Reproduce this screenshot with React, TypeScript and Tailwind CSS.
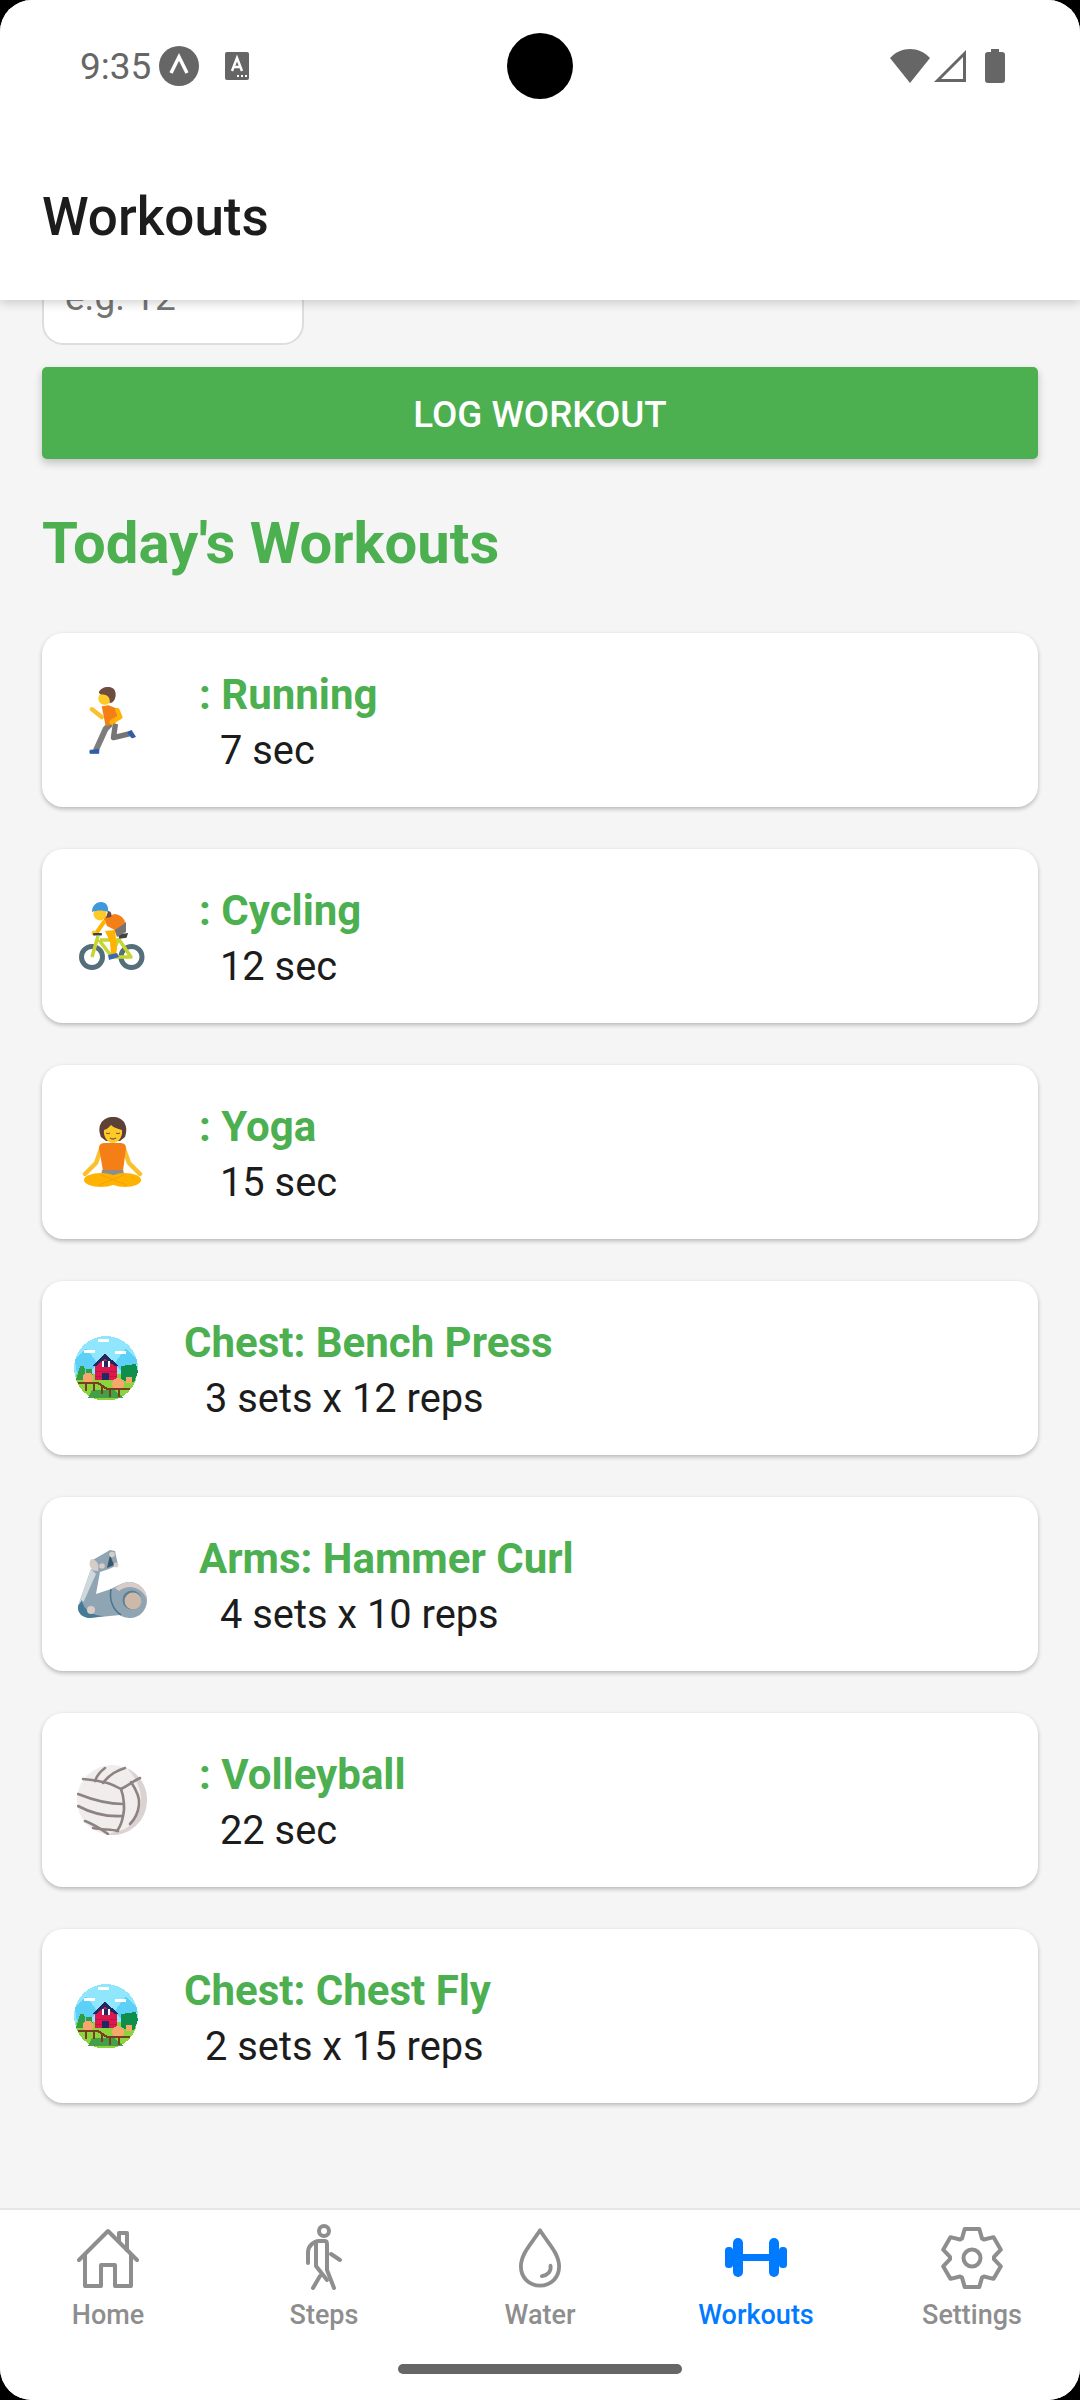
import React from "react";

const font = { fontFamily: "Roboto, sans-serif" };

function gearPath() {
  const cx = 32;
  const cy = 32;
  const pt = (deg: number, r: number) => {
    const a = (deg * Math.PI) / 180;
    return `${(cx + r * Math.cos(a)).toFixed(2)} ${(cy - r * Math.sin(a)).toFixed(2)}`;
  };
  let d = "";
  for (let i = 0; i < 6; i++) {
    const c = 90 + i * 60;
    d += `${i === 0 ? "M" : "L"}${pt(c - 27, 22)} L${pt(c - 14, 30)} L${pt(c + 14, 30)} L${pt(c + 27, 22)} `;
  }
  return d + "Z";
}

function Runner() {
  return (
    <svg viewBox="0 0 48 68" className="w-[47px] h-[68px]">
      <path d="M22 38 L17 43 L7 65" fill="none" stroke="#7d7d7d" strokeWidth="6" strokeLinejoin="round" />
      <path d="M27 38 L25 52 L42 48" fill="none" stroke="#757575" strokeWidth="5.5" strokeLinejoin="round" />
      <path d="M1 65 L10 64 L10 68 L1 68 Z" fill="#2f5da8" stroke="#2f5da8" strokeWidth="1" strokeLinejoin="round" />
      <path d="M40 47 L43 45 L47 51 L44 52 Z" fill="#2f5da8" stroke="#2f5da8" strokeWidth="1.5" strokeLinejoin="round" />
      <path d="M13 20 L20 19 L30 23 L29 31 L27 31 L27 38 L17 40 Z" fill="#f57f17" />
      <path d="M3 23 L13 31" fill="none" stroke="#fbc02d" strokeWidth="4.5" strokeLinecap="round" />
      <path d="M29 24 L32 31 L23 36" fill="none" stroke="#ffb300" strokeWidth="4.5" strokeLinecap="round" strokeLinejoin="round" />
      <circle cx="16" cy="12" r="6.5" fill="#ffca28" />
      <path d="M10 6 C12 -1 26 -2 27 6 C28 12 25 17 21 17 C22 12 20 9 15 8 C13 8 11 8 10 6 Z" fill="#6d4c41" />
    </svg>
  );
}

function Cyclist() {
  return (
    <svg viewBox="0 0 66 68" className="w-[66px] h-[68px]">
      <circle cx="13" cy="55" r="10.5" fill="none" stroke="#546e7a" strokeWidth="5" />
      <circle cx="52.5" cy="55" r="10.5" fill="none" stroke="#546e7a" strokeWidth="5" />
      <path d="M19 34 L13 55 M20 38 L33 55 L52 55 L39 36 M21 38 L39 38 L32 55" fill="none" stroke="#c6d631" strokeWidth="3.5" strokeLinejoin="round" />
      <path d="M40 33 L48 32 L47 35 L41 36 Z" fill="#424242" stroke="#424242" strokeWidth="1.5" />
      <path d="M35 27 L47 20 L47 30 L38 35 Z" fill="#757575" />
      <path d="M26 29 L36 28 L38 46 L37 53 L32 53 L31 40 Z" fill="#ffb300" />
      <path d="M29 53 L38 51 L40 55 L30 58 Z" fill="#3b67b5" />
      <path d="M24 15 L36 12 C42 13 46 17 46 21 L36 28 L28 24 Z" fill="#f57f17" />
      <path d="M25 20 L18 30" fill="none" stroke="#ffb300" strokeWidth="4" strokeLinecap="round" />
      <circle cx="15" cy="31" r="2.5" fill="#ffca28" />
      <rect x="14" y="31" width="9" height="2.5" rx="1" fill="#37474f" />
      <circle cx="21" cy="12" r="6.5" fill="#ffca28" />
      <path d="M29 9 C32 9 33 12 32 15 L27 16 Z" fill="#6d4c41" />
      <path d="M13 10 C13 3 18 0 22 0 C27 0 30 4 29 10 C24 8 18 8 13 10 Z" fill="#3f97dc" />
    </svg>
  );
}

function Yoga() {
  return (
    <svg viewBox="0 0 61 70" className="w-[61px] h-[70px]">
      <path d="M19 32 L14 46 L3 57 M42 32 L47 46 L58 57" fill="none" stroke="#fbc02d" strokeWidth="4.5" strokeLinecap="round" strokeLinejoin="round" />
      <path d="M17 31 C17 27 20 26 23 26 L38 26 C41 26 44 27 44 31 L41 54 L21 54 Z" fill="#f57f17" />
      <path d="M20 53 L41 53 L43 60 L19 60 Z" fill="#8d8d8d" />
      <ellipse cx="19" cy="63" rx="17" ry="7" fill="#ffb300" />
      <ellipse cx="43" cy="63" rx="16" ry="7" fill="#ffb300" />
      <path d="M19 58 L45 68 M42 58 L17 68" stroke="#f59e0b" strokeWidth="1" />
      <path d="M19 20 C14 8 21 0 31 0 C41 0 47 8 43 20 L38 24 L24 24 Z" fill="#5d4037" />
      <path d="M22 13 C26 12 28 9 29 8 C32 11 37 12 40 13 C41 20 36 26 31 26 C26 26 21 20 22 13 Z" fill="#ffca28" />
      <path d="M24 16 Q26 17.5 28 16 M34 16 Q36 17.5 38 16" stroke="#6d4c41" strokeWidth="1" fill="none" />
      <path d="M28 21 Q31 23 34 21" stroke="#795548" strokeWidth="1.3" fill="none" />
    </svg>
  );
}

function Arm() {
  return (
    <svg viewBox="0 0 70 68" className="w-[70px] h-[68px]">
      <path d="M14 19 L1 56 C0 63 6 68 13 68 L43 65 C47 68 52 68 53 68 C63 68 70 60 70 50 C70 40 62 32 52 32 C46 32 40 36 34 39 L19 44 L23 22 Z" fill="#8fa5b3" />
      <path d="M14 19 L1 56 L7 51 L19 24 Z" fill="#cfd8dc" />
      <path d="M38 38 C43 34 48 32 52 32 C62 32 70 40 70 50 C66 38 52 33 42 41 Z" fill="#d7ccc8" />
      <path d="M34 39 C32 50 36 60 44 65" fill="none" stroke="#37667f" strokeWidth="1.5" opacity="0.8" />
      <path d="M1 56 C0 63 6 68 13 68 L27 66 C16 66 6 60 5 50 Z" fill="#457b96" />
      <path d="M14 11 L33 0 L38 1 L41 15 L32 19 L23 22 C17 22 12 17 14 11 Z" fill="#8fa5b3" />
      <path d="M14 9 C19 9 23 14 21 21 C15 22 10 15 14 9 Z" fill="#d7ccc8" />
      <path d="M33 5 L37 15 L30 18 Z" fill="#37566b" />
      <circle cx="25" cy="16" r="2.8" fill="#d7ccc8" />
      <circle cx="35" cy="4.5" r="2.8" fill="#d7ccc8" />
      <circle cx="39" cy="15" r="2.4" fill="#d7ccc8" />
      <circle cx="55" cy="50" r="9.5" fill="#5c7f93" />
      <circle cx="56" cy="51" r="8.5" fill="#cdb9a8" />
      <circle cx="14" cy="60" r="4" fill="#d7ccc8" />
    </svg>
  );
}

function Volleyball() {
  return (
    <svg viewBox="0 0 70 70" className="w-[70px] h-[70px]">
      <circle cx="35" cy="35" r="35" fill="#f0edec" />
      <path d="M50 3 A35 35 0 0 1 70 35 A35 35 0 0 1 31 70 C36 67 40 66 41 66 C52 65 62 52 64 38 C65 26 60 14 50 3 Z" fill="#d9d3d1" />
      <g fill="none" stroke="#8d8380" strokeWidth="2.6" strokeLinecap="round">
        <path d="M6 14 C20 15 34 18 44 24 C52 20 58 15 63 13" />
        <path d="M1 29 C16 35 32 39 46 39" />
        <path d="M1 41 C14 48 30 52 46 51" />
        <path d="M44 24 C47 32 48 44 46 51 C45 57 43 62 40 66" />
        <path d="M54 17 C60 26 63 34 62 40 C61 48 57 55 53 59" />
        <path d="M18 16 C20 10 24 6 28 3" />
        <path d="M26 18 C32 10 38 6 48 3" />
        <path d="M8 56 C16 59 24 64 31 69" />
        <path d="M16 63 C26 65 34 64 41 66" />
      </g>
    </svg>
  );
}

function Barn() {
  return (
    <svg viewBox="0 0 64 64" className="w-[64px] h-[64px]" shapeRendering="crispEdges">
      <circle cx="32" cy="32" r="32" fill="#8fe6fd" />
      <path d="M1 24 L12 12 L24 28 L4 46 Z M63 24 L52 12 L40 28 L60 46 Z" fill="#5dd0f7" />
      <path d="M2 44 A32 32 0 0 0 62 44 L62 38 L2 38 Z" fill="#8bd43e" />
      <path d="M14 62 L50 62 L40 54 L18 54 Z" fill="#43a047" />
      <path d="M6 30 L10 30 L13 44 L2 44 Z M12 33 L18 33 L19 42 L12 42 Z" fill="#2f9e44" />
      <path d="M47 30 L62 28 L64 36 L60 46 L47 44 Z" fill="#0e8f4b" />
      <rect x="24" y="3" width="11" height="3" fill="#ffffff" />
      <rect x="10" y="14" width="11" height="3" fill="#ffffff" />
      <rect x="41" y="15" width="11" height="3" fill="#ffffff" />
      <path d="M31 20 L21 29 L21 44 L43 44 L43 29 Z" fill="#e0174f" />
      <path d="M21 35 H43 M21 40 H43" stroke="#c2134a" strokeWidth="1" />
      <path d="M31 18 L18 30 L22 30 L31 23 L41 30 L45 30 Z" fill="#1f2a63" />
      <rect x="28" y="25" width="7" height="6" fill="#1f2a63" />
      <rect x="28" y="25" width="2" height="6" fill="#ffffff" />
      <rect x="34" y="25" width="2" height="6" fill="#ffffff" />
      <rect x="28" y="37" width="7" height="7" fill="#1f2a63" />
      <circle cx="14" cy="42" r="5.5" fill="#f7a76c" />
      <circle cx="44" cy="48" r="6" fill="#f7a76c" />
      <circle cx="55" cy="44" r="3.5" fill="#f7a76c" />
      <path d="M4 47 L24 47 L33 53 L56 53" fill="none" stroke="#7a3e21" strokeWidth="2" />
      <rect x="11" y="47" width="2" height="8" fill="#7a3e21" />
      <rect x="19" y="47" width="2" height="8" fill="#7a3e21" />
      <rect x="27" y="49" width="2" height="9" fill="#7a3e21" />
      <rect x="35" y="53" width="2" height="8" fill="#7a3e21" />
      <rect x="44" y="53" width="2" height="8" fill="#7a3e21" />
    </svg>
  );
}

const rows = [
  { icon: <Runner />, title: ": Running", sub: "7 sec", box: "w-[76px] mr-[49px]" },
  { icon: <Cyclist />, title: ": Cycling", sub: "12 sec", box: "w-[76px] mr-[49px]" },
  { icon: <Yoga />, title: ": Yoga", sub: "15 sec", box: "w-[76px] mr-[49px]" },
  { icon: <Barn />, title: "Chest: Bench Press", sub: "3 sets x 12 reps", box: "w-[64px] mr-[46px]" },
  { icon: <Arm />, title: "Arms: Hammer Curl", sub: "4 sets x 10 reps", box: "w-[76px] mr-[49px]" },
  { icon: <Volleyball />, title: ": Volleyball", sub: "22 sec", box: "w-[76px] mr-[49px]" },
  { icon: <Barn />, title: "Chest: Chest Fly", sub: "2 sets x 15 reps", box: "w-[64px] mr-[46px]" },
];

function WorkoutCard({ icon, title, sub, box }: { icon: React.ReactNode; title: string; sub: string; box: string }) {
  return (
    <div className="h-[174px] rounded-[21px] bg-white pl-[32px] flex items-center shadow-[0_2px_4px_rgba(0,0,0,0.25)]">
      <div className={`${box} flex justify-center shrink-0`}>{icon}</div>
      <div className="pt-[4px]">
        <div className="text-[42px] leading-[55px] font-bold text-[#4caf50]">{title}</div>
        <div className="text-[39.8px] leading-[55px] mt-[1px] text-[#1c1c1c] pl-[21px]">{sub}</div>
      </div>
    </div>
  );
}

function NavItem({ label, active, children }: { label: string; active?: boolean; children: React.ReactNode }) {
  return (
    <div className="flex-1 flex flex-col items-center">
      <div className="h-[68px] flex items-center justify-center">{children}</div>
      <div className={`text-[27px] leading-[34px] mt-[6px] font-medium ${active ? "text-[#007aff]" : "text-[#8e8e8f]"}`}>{label}</div>
    </div>
  );
}

export default function App() {
  return (
    <div className="w-[1080px] h-[2400px] bg-black" style={font}>
      <div className="w-full h-full bg-[#f5f5f5] rounded-[32px] overflow-hidden flex flex-col">
        <header className="relative z-10 h-[300px] shrink-0 bg-white shadow-[0_3px_10px_rgba(0,0,0,0.18)]">
          <div className="h-[130px] pl-[80px] pr-[75px] flex items-start justify-between pt-[44px]">
            <div className="flex items-center h-[44px]">
              <span className="text-[37px] leading-none text-[#666666]">9:35</span>
              <svg viewBox="0 0 40 40" className="w-[40px] h-[40px] ml-[8px]">
                <circle cx="20" cy="20" r="20" fill="#666666" />
                <path d="M12 27 L20 11 L28 27" fill="none" stroke="#fff" strokeWidth="3.5" />
              </svg>
              <svg viewBox="0 0 24 28" className="w-[24px] h-[28px] ml-[26px]">
                <rect width="24" height="28" rx="2" fill="#666666" />
                <path d="M7 19 L12 6 L17 19 M9 15 L15 15" fill="none" stroke="#fff" strokeWidth="2.5" />
                <path d="M12 24 h2 M16 24 h2 M20 24 h2" stroke="#fff" strokeWidth="2" />
              </svg>
            </div>
            <div className="flex items-center h-[44px] gap-[4px]">
              <svg viewBox="0 0 40 34" className="w-[40px] h-[34px]">
                <path d="M0 9 C11 -3 29 -3 40 9 L20 34 Z" fill="#666666" />
              </svg>
              <svg viewBox="0 0 32 32" className="w-[32px] h-[34px]">
                <path d="M30.5 3.5 L30.5 30.5 L3.5 30.5 Z" fill="none" stroke="#666666" strokeWidth="3" />
              </svg>
              <svg viewBox="0 0 20 34" className="w-[20px] h-[34px] ml-[15px]">
                <path d="M6 0 H14 V3 H17 C19 3 20 4 20 6 V31 C20 33 19 34 17 34 H3 C1 34 0 33 0 31 V6 C0 4 1 3 3 3 H6 Z" fill="#666666" />
              </svg>
            </div>
          </div>
          <div className="absolute left-[507px] top-[33px] w-[66px] h-[66px] rounded-full bg-black" />
          <h1 className="px-[42px] pt-[56px] text-[53px] leading-[62px] font-medium text-[#1c1c1c]">Workouts</h1>
        </header>

        <main className="flex-1 overflow-hidden px-[42px]">
          <div className="-mt-[51px]">
            <div className="w-[262px] h-[96px] rounded-[21px] bg-white border-2 border-[#dddddd] px-[21px] pt-[2px] flex items-center text-[37px] text-[#757575]">
              e.g. 12
            </div>
            <button className="mt-[22px] w-full h-[92px] rounded-[5px] bg-[#4caf50] text-white text-[36.75px] font-medium pt-[4px] shadow-[0_4px_8px_rgba(0,0,0,0.22)]">
              LOG WORKOUT
            </button>
            <h2 className="mt-[49px] text-[58px] leading-[70px] font-bold text-[#4caf50]">Today's Workouts</h2>
            <div className="mt-[55px] flex flex-col gap-[42px]">
              {rows.map((r, i) => (
                <WorkoutCard key={i} {...r} />
              ))}
            </div>
          </div>
        </main>

        <nav className="relative h-[192px] shrink-0 bg-white border-t-2 border-[#e6e6e6] flex pt-[14px]">
          <NavItem label="Home">
            <svg viewBox="0 0 62 60" className="w-[62px] h-[60px]" fill="none" stroke="#8e8e8f" strokeWidth="4" strokeLinecap="round" strokeLinejoin="round">
              <path d="M2 32 L31 3 L60 32" />
              <path d="M8 27 V58 H24 V37 H38 V58 H54 V27" />
              <path d="M42 5 H50 V22 M42 5 V13" />
            </svg>
          </NavItem>
          <NavItem label="Steps">
            <svg viewBox="0 0 38 68" className="w-[38px] h-[68px]" fill="none" stroke="#8e8e8f" strokeWidth="4" strokeLinecap="round" strokeLinejoin="round">
              <circle cx="19" cy="7" r="5" />
              <path d="M3 39 V28 C3 22 9 17 14 17 H20 C22 17 22 19 22 22 V46 L29 64" />
              <path d="M11 19 V42 L22 56" />
              <path d="M26 30 L35 36" />
              <path d="M15 52 L8 64" />
            </svg>
          </NavItem>
          <NavItem label="Water">
            <svg viewBox="0 0 44 62" className="w-[42px] h-[62px]" fill="none" stroke="#8e8e8f" strokeWidth="4" strokeLinecap="round" strokeLinejoin="round">
              <path d="M22 2 C14 15 2 26 2 40 C2 52 11 60 22 60 C33 60 42 52 42 40 C42 26 30 15 22 2 Z" />
              <path d="M33 39 C34 45 30 49 24 50" />
            </svg>
          </NavItem>
          <NavItem label="Workouts" active>
            <svg viewBox="0 0 62 40" className="w-[62px] h-[40px]" fill="#007aff">
              <rect x="0" y="9" width="8" height="21" rx="3.5" />
              <rect x="8" y="0" width="10" height="39" rx="5" />
              <rect x="44" y="0" width="10" height="39" rx="5" />
              <rect x="54" y="9" width="8" height="21" rx="3.5" />
              <rect x="16" y="16" width="30" height="7" />
            </svg>
          </NavItem>
          <NavItem label="Settings">
            <svg viewBox="0 0 64 64" className="w-[64px] h-[64px]" fill="none" stroke="#8e8e8f" strokeWidth="4" strokeLinejoin="round">
              <path d={gearPath()} />
              <circle cx="32" cy="32" r="8.5" />
            </svg>
          </NavItem>
          <div className="absolute left-[398px] bottom-[26px] w-[284px] h-[10px] rounded-full bg-[#666666]" />
        </nav>
      </div>
    </div>
  );
}
